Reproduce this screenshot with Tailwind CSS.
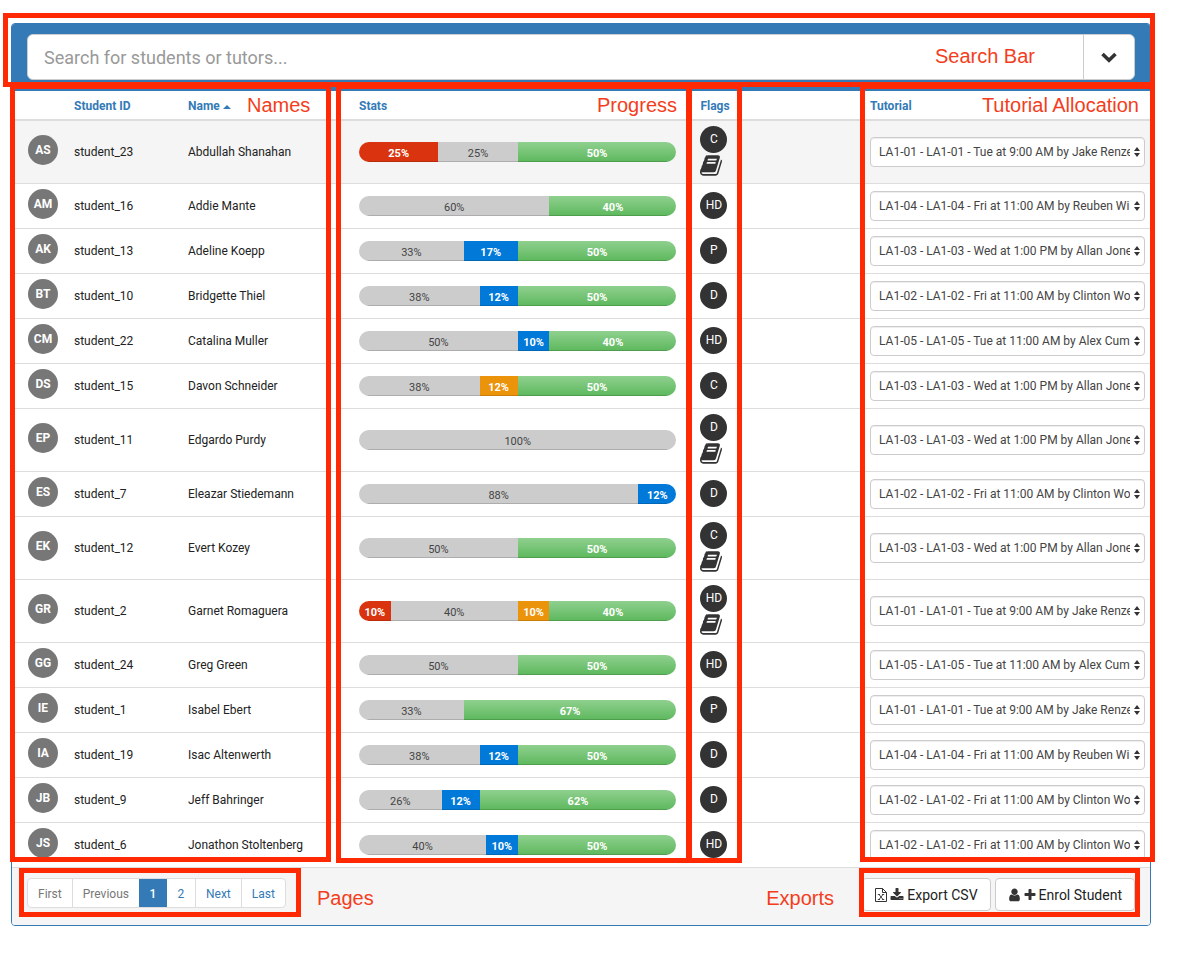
<!DOCTYPE html>
<html lang="en">
<head>
    <meta charset="UTF-8">
    <meta name="viewport" content="width=device-width, initial-scale=1.0">
    <title>Student List</title>
    <script src="https://cdn.jsdelivr.net/npm/@tailwindcss/browser@4"></script>
</head>
<body class="bg-white font-[Roboto,sans-serif] text-xs text-[#222]">

<div class="relative pt-[23px] pl-[11px] pr-8 pb-7">

    <!-- Panel -->
    <main class="border border-[#337ab7] rounded overflow-hidden">

        <!-- Search -->
        <form class="bg-[#337ab7] px-[15px] pt-2.5 pb-[11px]">
            <div class="flex h-[46px] bg-white rounded-md overflow-hidden border border-[#ccc]">
                <input type="text" id="search" aria-label="Search" placeholder="Search for students or tutors..." class="flex-1 min-w-0 px-4 pt-0.5 text-lg text-gray-800 placeholder:text-[#999] outline-none">
                <button type="button" aria-label="Search options" class="w-[51px] flex items-center justify-center border-l border-[#ccc]">
                    <svg class="w-4 h-4" viewBox="0 0 16 16" fill="none" stroke="#333" stroke-width="3.6"><path d="M1.5 5 8 11.2 14.5 5"/></svg>
                </button>
            </div>
        </form>

        <!-- Students -->
        <table class="w-full table-fixed border-collapse text-left">
            <colgroup>
                <col class="w-[54px]">
                <col class="w-[114px]">
                <col class="w-[171px]">
                <col class="w-[30%]">
                <col>
                <col class="w-[288px]">
            </colgroup>
            <thead class="text-[#337ab7]">
                <tr class="border-b-2 border-[#ddd]">
                    <td class="h-[29px]"></td>
                    <th class="px-2 pt-0.5">Student ID</th>
                    <th class="px-2 pt-0.5">Name <span class="inline-block border-x-4 border-b-4 border-x-transparent border-b-[#337ab7] align-middle"></span></th>
                    <th class="px-2 pt-0.5">Stats</th>
                    <th class="px-2 pt-0.5">Flags</th>
                    <th class="px-2 pt-0.5">Tutorial</th>
                </tr>
            </thead>
            <tbody id="students"></tbody>
        </table>

        <!-- Footer -->
        <footer class="flex items-start justify-between bg-[#f5f5f5] border-t border-[#ddd] pt-2.5 pb-3.5 px-[15px]">
            <nav aria-label="Pages" class="flex h-[30px] leading-[30px] bg-white border border-[#ddd] rounded overflow-hidden text-[#337ab7] text-center">
                <a href="#" class="px-2.5 text-[#777]">First</a>
                <a href="#" class="px-2.5 text-[#777] border-l border-[#ddd]">Previous</a>
                <a href="#" class="min-w-7 px-2.5 bg-[#337ab7] text-white font-medium">1</a>
                <a href="#" class="min-w-7 px-2.5">2</a>
                <a href="#" class="px-2.5 border-l border-[#ddd]">Next</a>
                <a href="#" class="px-2.5 border-l border-[#ddd]">Last</a>
            </nav>
            <div class="flex gap-1 text-sm">
                <button type="button" class="flex items-center gap-[3px] h-[33px] px-3 bg-white border border-[#ccc] rounded">
                    <svg class="w-3 h-3.5" viewBox="0 0 12 14" fill="none" stroke="#333"><path d="M.5.5h7l4 4v9H.5zM7.5.5v4h4"/><path d="M2.800 6.500h2.200M7 6.500h2.200M2.800 11.500h2.200M7 11.500h2.200M4 6.500l4 5M8 6.500l-4 5" stroke-width=".9"/></svg>
                    <svg class="w-3.5 h-3.5" viewBox="0 0 1792 1792" fill="#333"><path d="M1344 1344q0-26-19-45t-45-19-45 19-19 45 19 45 45 19 45-19 19-45zm256 0q0-26-19-45t-45-19-45 19-19 45 19 45 45 19 45-19 19-45zm128-224v320q0 40-28 68t-68 28h-1472q-40 0-68-28t-28-68v-320q0-40 28-68t68-28h465l135 136q58 56 136 56t136-56l136-136h464q40 0 68 28t28 68zm-325-569q17 41-14 70l-448 448q-18 19-45 19t-45-19l-448-448q-31-29-14-70 17-39 59-39h256v-448q0-26 19-45t45-19h256q26 0 45 19t19 45v448h256q42 0 59 39z"/></svg>
                    Export CSV
                </button>
                <button type="button" class="flex items-center gap-[3px] h-[33px] px-3 bg-white border border-[#ccc] rounded">
                    <svg class="w-[13px] h-3.5" viewBox="256 60 1280 1680" fill="#333"><path d="M1536 1399q0 109-62.500 187t-150.500 78h-854q-88 0-150.500-78t-62.500-187q0-85 8.500-160.500t31.500-152 58.500-131 94-89 134.500-34.500q131 128 313 128t313-128q76 0 134.500 34.500t94 89 58.500 131 31.500 152 8.500 160.500zm-256-887q0 159-112.500 271.500t-271.500 112.500-271.500-112.500-112.500-271.500 112.500-271.500 271.500-112.500 271.500 112.500 112.500 271.500z"/></svg>
                    <svg class="w-3 h-3.5" viewBox="192 0 1408 1792" fill="#333"><path d="M1600 736v192q0 40-28 68t-68 28h-416v416q0 40-28 68t-68 28h-192q-40 0-68-28t-28-68v-416h-416q-40 0-68-28t-28-68v-192q0-40 28-68t68-28h416v-416q0-40 28-68t68-28h192q40 0 68 28t28 68v416h416q40 0 68 28t28 68z"/></svg>
                    Enrol Student
                </button>
            </div>
        </footer>
    </main>

    <!-- Callouts -->
    <div class="absolute inset-0 pointer-events-none font-['Liberation_Sans',sans-serif] text-xl leading-6 text-[#f43d20]">
        <div class="absolute left-[3px] right-7 top-[13px] h-[74px] border-5 border-[#ff2a04]"></div>
        <div class="absolute left-[10px] w-[321px] top-[84px] h-[778px] border-5 border-[#ff2a04]"></div>
        <div class="absolute left-[336px] w-[355px] top-[84px] h-[779px] border-5 border-[#ff2a04]"></div>
        <div class="absolute left-[687px] w-[55px] top-[84px] h-[779px] border-5 border-[#ff2a04]"></div>
        <div class="absolute right-7 w-[295px] top-[84px] h-[778px] border-5 border-[#ff2a04]"></div>
        <div class="absolute left-[19px] w-[282px] top-[868px] h-[49px] border-5 border-[#ff2a04]"></div>
        <div class="absolute right-[43px] w-[281px] top-[868px] h-[49px] border-5 border-[#ff2a04]"></div>

        <span class="absolute right-[148px] top-11">Search Bar</span>
        <span class="absolute left-[247px] top-[93px]">Names</span>
        <span class="absolute left-[597px] top-[93px]">Progress</span>
        <span class="absolute right-11 top-[93px]">Tutorial Allocation</span>
        <span class="absolute left-[317px] top-[886px]">Pages</span>
        <span class="absolute right-[349px] top-[886px]">Exports</span>
    </div>
</div>

<script>
    const tutorials = {
        jake: 'LA1-01 - LA1-01 - Tue at 9:00 AM by Jake Renzella',
        clinton: 'LA1-02 - LA1-02 - Fri at 11:00 AM by Clinton Woodward',
        allan: 'LA1-03 - LA1-03 - Wed at 1:00 PM by Allan Jones',
        reuben: 'LA1-04 - LA1-04 - Fri at 11:00 AM by Reuben Wilson',
        alex: 'LA1-05 - LA1-05 - Tue at 11:00 AM by Alex Cummaudo'
    };

    // r = fail, n = not started, b = working, o = needs help, g = complete
    const colors = {
        r: 'bg-[#d9340f] text-white font-bold',
        n: 'bg-[#ccc] text-[#444]',
        b: 'bg-[#0079d8] text-white font-bold',
        o: 'bg-[#ec930c] text-white font-bold',
        g: 'bg-linear-to-b from-[#8fd08f] to-[#5cb85c] text-white font-bold'
    };

    // initials, id, name, stats, grade, portfolio, tutorial
    const students = [
        ['AS', 'student_23', 'Abdullah Shanahan', [['r', 25], ['n', 25], ['g', 50]], 'C', true, 'jake'],
        ['AM', 'student_16', 'Addie Mante', [['n', 60], ['g', 40]], 'HD', false, 'reuben'],
        ['AK', 'student_13', 'Adeline Koepp', [['n', 33], ['b', 17], ['g', 50]], 'P', false, 'allan'],
        ['BT', 'student_10', 'Bridgette Thiel', [['n', 38], ['b', 12], ['g', 50]], 'D', false, 'clinton'],
        ['CM', 'student_22', 'Catalina Muller', [['n', 50], ['b', 10], ['g', 40]], 'HD', false, 'alex'],
        ['DS', 'student_15', 'Davon Schneider', [['n', 38], ['o', 12], ['g', 50]], 'C', false, 'allan'],
        ['EP', 'student_11', 'Edgardo Purdy', [['n', 100]], 'D', true, 'allan'],
        ['ES', 'student_7', 'Eleazar Stiedemann', [['n', 88], ['b', 12]], 'D', false, 'clinton'],
        ['EK', 'student_12', 'Evert Kozey', [['n', 50], ['g', 50]], 'C', true, 'allan'],
        ['GR', 'student_2', 'Garnet Romaguera', [['r', 10], ['n', 40], ['o', 10], ['g', 40]], 'HD', true, 'jake'],
        ['GG', 'student_24', 'Greg Green', [['n', 50], ['g', 50]], 'HD', false, 'alex'],
        ['IE', 'student_1', 'Isabel Ebert', [['n', 33], ['g', 67]], 'P', false, 'jake'],
        ['IA', 'student_19', 'Isac Altenwerth', [['n', 38], ['b', 12], ['g', 50]], 'D', false, 'reuben'],
        ['JB', 'student_9', 'Jeff Bahringer', [['n', 26], ['b', 12], ['g', 62]], 'D', false, 'clinton'],
        ['JS', 'student_6', 'Jonathon Stoltenberg', [['n', 40], ['b', 10], ['g', 50]], 'HD', false, 'clinton']
    ];

    const book = `
        <svg class="block mt-0.5 w-[22px] h-[21px]" viewBox="64 128 1664 1536" fill="#333">
            <path d="M1703 478q40 57 18 129l-275 906q-19 64-76.500 107.500t-122.500 43.500h-923q-77 0-148.500-53.500t-99.500-131.500q-24-67-2-127 0-4 3-27t4-37q1-8-3-21.500t-3-19.500q2-11 8-21t16.500-23.500 16.500-23.500q23-38 45-91.500t30-91.500q3-10 .5-30t-.5-28q3-11 17-28t17-23q21-36 42-92t25-90q1-9-2.500-32t.5-28q4-13 22-30.500t22-22.500q19-26 42.500-84.500t27.500-96.500q1-8-3-25.500t-2-26.500q2-8 9-18t18-23 17-21q8-12 16.500-30.500t15-35 16-36 19.500-32 26.500-23.500 36-11.500 47.500 5.500l-1 3q38-9 51-9h761q74 0 114 56t18 130l-274 906q-36 119-71.500 153.500t-128.500 34.500h-869q-27 0-38 15-11 16-1 43 24 70 144 70h923q29 0 56-15.500t35-41.500l300-987q7-22 5-57 38 15 59 43zm-1064 2q-4 13 2 22.500t20 9.500h608q13 0 25.500-9.500t16.500-22.500l21-64q4-13-2-22.500t-20-9.500h-608q-13 0-25.500 9.500t-16.500 22.500zm-83 256q-4 13 2 22.500t20 9.500h608q13 0 25.500-9.500t16.500-22.500l21-64q4-13-2-22.500t-20-9.500h-608q-13 0-25.500 9.500t-16.500 22.500z"/>
        </svg>`;

    document.getElementById('students').innerHTML = students.map(([initials, id, name, stats, grade, portfolio, tutorial]) => `
        <tr class="border-t border-[#ddd] first:border-t-0 first:bg-[#f5f5f5]">
            <td class="pl-4 pb-1"><div class="w-[30px] h-[30px] rounded-full bg-[#777] text-white font-bold text-center leading-[30px]">${initials}</div></td>
            <td class="px-2">${id}</td>
            <td class="px-2">${name}</td>
            <td class="pl-2 pr-4">
                <div class="flex h-5 rounded-full overflow-hidden text-[11px] leading-[23px] text-center">
                    ${stats.map(([kind, value]) => `<div class="${colors[kind]} shadow-[inset_0_-1px_0_rgba(0,0,0,0.15)]" style="width: ${value}%">${value}%</div>`).join('')}
                </div>
            </td>
            <td class="pl-2 pt-[5px] pb-[7px]">
                <div class="w-[27px] h-[27px] rounded-full bg-[#333] text-white text-center leading-[27px]">${grade}</div>
                ${portfolio ? book : ''}
            </td>
            <td class="pl-2 pr-[5px] py-[7px]">
                <div class="relative">
                    <select aria-label="Tutorial for ${name}" class="block appearance-none w-full h-[30px] pl-2 pr-3.5 bg-white border border-[#ccc] rounded text-[#444] shadow-[inset_0_1px_1px_rgba(0,0,0,0.075)]">
                        <option>${tutorials[tutorial]}</option>
                    </select>
                    <svg class="absolute right-[5px] top-2.5 w-1.5 h-2.5 pointer-events-none" viewBox="0 0 6 10" fill="#333"><path d="M3 0l3 4H0zM3 10l3-4H0z"/></svg>
                </div>
            </td>
        </tr>`).join('');
</script>
</body>
</html>
